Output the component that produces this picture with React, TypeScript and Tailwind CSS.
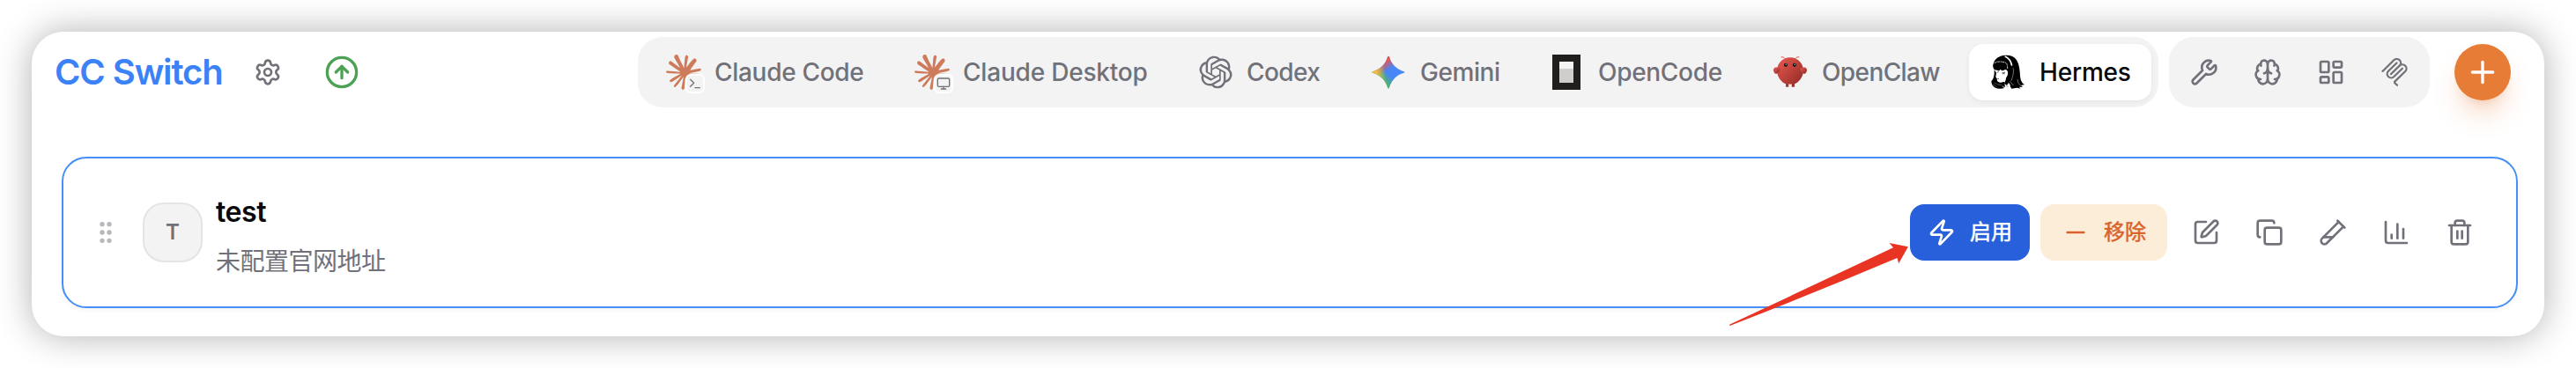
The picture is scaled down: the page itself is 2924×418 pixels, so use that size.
import type { ReactNode } from "react";
import {
  Brain,
  ChartColumn,
  CircleArrowUp,
  Copy,
  GripVertical,
  LayoutDashboard,
  Minus,
  Monitor,
  Plus,
  Settings,
  SquarePen,
  Terminal,
  TestTubeDiagonal,
  Trash2,
  Wrench,
  Zap,
} from "lucide-react";

function ClaudeIcon({ badge }: { badge: ReactNode }) {
  return (
    <span className="relative block size-10">
      <svg viewBox="0 0 24 24" className="size-10" fill="#ce7b5c">
        <path d="M4.709 15.955l4.72-2.647.08-.23-.08-.128H9.2l-.79-.048-2.698-.073-2.339-.097-2.266-.122-.571-.121L0 11.784l.055-.352.48-.321.686.06 1.52.103 2.278.158 1.652.097 2.449.255h.389l.055-.157-.134-.098-.103-.097-2.358-1.596-2.552-1.688-1.336-.972-.724-.491-.364-.462-.158-1.008.656-.722.881.06.225.061.893.686 1.908 1.476 2.491 1.833.365.304.145-.103.019-.073-.164-.274-1.355-2.446-1.446-2.49-.644-1.032-.17-.619a2.97 2.97 0 01-.104-.729L6.283.134 6.696 0l.996.134.42.364.62 1.414 1.002 2.229 1.555 3.03.456.898.243.832.091.255h.158V9.01l.128-1.706.237-2.095.23-2.695.08-.76.376-.91.747-.492.584.28.48.685-.067.444-.286 1.851-.559 2.903-.364 1.942h.212l.243-.242.985-1.306 1.652-2.064.73-.82.85-.904.547-.431h1.033l.76 1.129-.34 1.166-1.064 1.347-.881 1.142-1.264 1.7-.79 1.36.073.11.188-.02 2.856-.606 1.543-.28 1.841-.315.833.388.091.395-.328.807-1.969.486-2.309.462-3.439.813-.042.03.049.061 1.549.146.662.036h1.622l3.02.225.79.522.474.638-.079.485-1.215.62-1.64-.389-3.829-.91-1.312-.329h-.182v.11l1.093 1.068 2.006 1.81 2.509 2.33.127.578-.322.455-.34-.049-2.205-1.657-.851-.747-1.926-1.62h-.128v.17l.444.649 2.345 3.521.122 1.08-.17.353-.608.213-.668-.122-1.374-1.925-1.415-2.167-1.143-1.943-.14.08-.674 7.254-.316.37-.729.28-.607-.461-.322-.747.322-1.476.389-1.924.315-1.53.286-1.9.17-.632-.012-.042-.14.018-1.434 1.967-2.18 2.945-1.726 1.845-.414.164-.717-.37.067-.662.401-.589 2.388-3.036 1.44-1.882.93-1.086-.006-.158h-.055L4.132 18.56l-1.13.146-.487-.456.061-.746.231-.243 1.908-1.312-.006.006z" />
      </svg>
      <span className="absolute -right-1 -bottom-1 flex size-[22px] items-center justify-center rounded-[6px] border-2 border-white bg-[#f3f3f3]">
        {badge}
      </span>
    </span>
  );
}

function CodexIcon() {
  return (
    <svg viewBox="0 0 24 24" className="size-10" fill="currentColor" fillRule="evenodd">
      <path d="M21.55 10.004a5.416 5.416 0 00-.478-4.501c-1.217-2.09-3.662-3.166-6.05-2.66A5.59 5.59 0 0010.831 1C8.39.995 6.224 2.546 5.473 4.838A5.553 5.553 0 001.76 7.496a5.487 5.487 0 00.691 6.5 5.416 5.416 0 00.477 4.502c1.217 2.09 3.662 3.165 6.05 2.66A5.586 5.586 0 0013.168 23c2.443.006 4.61-1.546 5.361-3.84a5.553 5.553 0 003.715-2.66 5.488 5.488 0 00-.693-6.497v.001zm-8.381 11.558a4.199 4.199 0 01-2.675-.954c.034-.018.093-.05.132-.074l4.44-2.53a.71.71 0 00.364-.623v-6.176l1.877 1.069c.02.01.033.029.036.05v5.115c-.003 2.274-1.87 4.118-4.174 4.123zM4.192 17.78a4.059 4.059 0 01-.498-2.763c.032.02.09.055.131.078l4.44 2.53c.225.13.504.13.73 0l5.42-3.088v2.138a.068.068 0 01-.027.057L9.9 19.288c-1.999 1.136-4.552.46-5.707-1.51h-.001zM3.023 8.216A4.15 4.15 0 015.198 6.41l-.002.151v5.06a.711.711 0 00.364.624l5.42 3.087-1.876 1.07a.067.067 0 01-.063.005l-4.489-2.559c-1.995-1.14-2.679-3.658-1.53-5.63h.001zm15.417 3.54l-5.42-3.088L14.896 7.6a.067.067 0 01.063-.006l4.489 2.557c1.998 1.14 2.683 3.662 1.529 5.633a4.163 4.163 0 01-2.174 1.807V12.38a.71.71 0 00-.363-.623zm1.867-2.773a6.04 6.04 0 00-.132-.078l-4.44-2.53a.731.731 0 00-.729 0l-5.42 3.088V7.325a.068.068 0 01.027-.057L14.1 4.713c2-1.137 4.555-.46 5.707 1.513.487.833.664 1.809.499 2.757h.001zm-11.741 3.81l-1.877-1.068a.065.065 0 01-.036-.051V6.559c.001-2.277 1.873-4.122 4.181-4.12.976 0 1.92.338 2.671.954-.034.018-.092.05-.131.073l-4.44 2.53a.71.71 0 00-.365.623l-.003 6.173v.002zm1.02-2.168L12 9.25l2.414 1.375v2.75L12 14.75l-2.415-1.375v-2.75z" />
    </svg>
  );
}

const geminiPath =
  "M20.616 10.835a14.147 14.147 0 01-4.45-3.001 14.111 14.111 0 01-3.678-6.452.503.503 0 00-.975 0 14.134 14.134 0 01-3.679 6.452 14.155 14.155 0 01-4.45 3.001c-.65.28-1.318.505-2.002.678a.502.502 0 000 .975c.684.172 1.35.397 2.002.677a14.147 14.147 0 014.45 3.001 14.112 14.112 0 013.679 6.453.502.502 0 00.975 0c.172-.685.397-1.351.677-2.003a14.145 14.145 0 013.001-4.45 14.113 14.113 0 016.453-3.678.503.503 0 000-.975 13.245 13.245 0 01-2.003-.678z";

function GeminiIcon() {
  return (
    <svg viewBox="0 0 24 24" className="size-10">
      <defs>
        <linearGradient id="gem-green" gradientUnits="userSpaceOnUse" x1="7" y1="15.5" x2="11" y2="12">
          <stop stopColor="#4fb565" />
          <stop offset="1" stopColor="#4fb565" stopOpacity="0" />
        </linearGradient>
        <linearGradient id="gem-red" gradientUnits="userSpaceOnUse" x1="8" y1="5.5" x2="11.5" y2="11">
          <stop stopColor="#e9554b" />
          <stop offset="1" stopColor="#e9554b" stopOpacity="0" />
        </linearGradient>
        <linearGradient id="gem-yellow" gradientUnits="userSpaceOnUse" x1="3.5" y1="13.5" x2="17.5" y2="12">
          <stop stopColor="#f3c042" />
          <stop offset=".46" stopColor="#f3c042" stopOpacity="0" />
        </linearGradient>
      </defs>
      <path d={geminiPath} fill="#4686f7" />
      <path d={geminiPath} fill="url(#gem-green)" />
      <path d={geminiPath} fill="url(#gem-red)" />
      <path d={geminiPath} fill="url(#gem-yellow)" />
    </svg>
  );
}

function OpenCodeIcon() {
  return (
    <svg viewBox="0 0 40 40" className="size-10">
      <path d="M4 0h32v40H4z" fill="#211e1e" />
      <path d="M12 8h16v8H12z" fill="#f3f3f3" />
      <path d="M12 16h16v16H12z" fill="#cfcecd" />
    </svg>
  );
}

function OpenClawIcon() {
  return (
    <svg viewBox="0 0 120 120" className="size-10">
      <defs>
        <linearGradient id="claw" x1="0%" y1="0%" x2="100%" y2="100%">
          <stop offset="0%" stopColor="#eb5a52" />
          <stop offset="100%" stopColor="#8c2822" />
        </linearGradient>
      </defs>
      <path
        d="M60 10C30 10 15 35 15 55C15 75 30 95 45 100L45 110L55 110L55 100C55 100 60 102 65 100L65 110L75 110L75 100C90 95 105 75 105 55C105 35 90 10 60 10Z"
        fill="url(#claw)"
      />
      <path d="M20 45C5 40 0 50 5 60C10 70 20 65 25 55C28 48 25 45 20 45Z" fill="url(#claw)" />
      <path d="M100 45C115 40 120 50 115 60C110 70 100 65 95 55C92 48 95 45 100 45Z" fill="url(#claw)" />
      <path d="M45 15Q35 5 30 8M75 15Q85 5 90 8" fill="none" stroke="#eb5a52" strokeWidth="3" strokeLinecap="round" />
      <circle cx="45" cy="35" r="6" fill="#06080f" />
      <circle cx="75" cy="35" r="6" fill="#06080f" />
      <circle cx="46" cy="34" r="2.5" fill="#5de2cd" />
      <circle cx="76" cy="34" r="2.5" fill="#5de2cd" />
    </svg>
  );
}

function HermesIcon() {
  return (
    <svg viewBox="15 12 120 120" className="size-10">
      {/* hair */}
      <path d="M68 14C46 15 30 26 26 43C23 51 25 58 30 64L38 65L44 68L52 65L58 68L66 64C72 64 76 70 75 79C74 87 70 88 69 92C69 100 64 106 62 112L70 117L78 112L88 128L108 125L118 128L114 122L126 123L120 117L132 114C121 108 118 96 117 84C116 66 115 48 106 32C98 18 84 13 68 14Z" />
      {/* lower left locks */}
      <path d="M29 64L29 78C27 90 26 96 19 103C19 113 24 121 34 126C42 129 54 129 64 126L55 121L66 122L70 113L61 104C52 110 45 107 39 102L38 94L34 88L36 74Z" />
      {/* headband */}
      <path d="M65 18C77 23 86 34 89 50" fill="none" stroke="#fff" strokeWidth="5" />
      {/* fringe highlight and parted strands */}
      <path d="M29 41C42 33 56 36 69 40M70 41C74 46 74 52 74 60" fill="none" stroke="#fff" strokeWidth="2.4" strokeDasharray="7 2 4 1" />
      <path d="M93 58C97 74 91 88 87 101M108 96C109 107 113 114 121 119M82 103L94 117" fill="none" stroke="#fff" strokeWidth="1.3" />
      {/* face */}
      <path d="M37 65L45 68L50 62L55 68L61 65L69 64C76 68 76 79 71 84C69 91 67 98 61 104C53 107 46 104 42 101L40 94L35 89L38 84L36 76Z" fill="#fff" />
      <path d="M38 73L44 71M55 75L66 72M57 79C60 76 63 76 65 78M40 95L45 95" fill="none" stroke="#000" strokeWidth="2" />
      {/* collar */}
      <path d="M64 111L72 118L78 107L84 117L76 127L66 122Z" fill="#fff" />
      <path d="M68 114L78 124M76 112L70 124M24 113L38 122M28 108L48 117M44 112L60 119" stroke="#888" strokeWidth="1.6" />
    </svg>
  );
}

function McpIcon() {
  return (
    <svg viewBox="0 0 24 24" className="size-8" fill="currentColor" fillRule="evenodd">
      <path d="M15.688 2.343a2.588 2.588 0 00-3.61 0l-9.626 9.44a.863.863 0 01-1.203 0 .823.823 0 010-1.18l9.626-9.44a4.313 4.313 0 016.016 0 4.116 4.116 0 011.204 3.54 4.3 4.3 0 013.609 1.18l.05.05a4.115 4.115 0 010 5.9l-8.706 8.537a.274.274 0 000 .393l1.788 1.754a.823.823 0 010 1.18.863.863 0 01-1.203 0l-1.788-1.753a1.92 1.92 0 010-2.754l8.706-8.538a2.47 2.47 0 000-3.54l-.05-.049a2.588 2.588 0 00-3.607-.003l-7.172 7.034-.002.002-.098.097a.863.863 0 01-1.204 0 .823.823 0 010-1.18l7.273-7.133a2.47 2.47 0 00-.003-3.537z" />
      <path d="M14.485 4.703a.823.823 0 000-1.18.863.863 0 00-1.204 0l-7.119 6.982a4.115 4.115 0 000 5.9 4.314 4.314 0 006.016 0l7.12-6.982a.823.823 0 000-1.18.863.863 0 00-1.204 0l-7.119 6.982a2.588 2.588 0 01-3.61 0 2.47 2.47 0 010-3.54l7.12-6.982z" />
    </svg>
  );
}

const apps = [
  { label: "Claude Code", icon: <ClaudeIcon badge={<Terminal className="size-4" />} />, size: "w-[274px] gap-[15px]", tracking: "tracking-[-0.3px]" },
  { label: "Claude Desktop", icon: <ClaudeIcon badge={<Monitor className="size-4" />} />, size: "w-[314px] gap-[15px]", tracking: "tracking-[-0.2px]" },
  { label: "Codex", icon: <CodexIcon />, size: "w-[188px] gap-[15px]", tracking: "tracking-[-0.6px]" },
  { label: "Gemini", icon: <GeminiIcon />, size: "w-[194px] gap-4", tracking: "tracking-[-0.45px]" },
  { label: "OpenCode", icon: <OpenCodeIcon />, size: "w-[246px] gap-4", tracking: "tracking-[-0.3px]" },
  { label: "OpenClaw", icon: <OpenClawIcon />, size: "w-[239px] gap-4", tracking: "tracking-[-0.6px]" },
  { label: "Hermes", icon: <HermesIcon />, size: "w-[207px] gap-4", tracking: "tracking-[-0.2px]", active: true },
];

const tools = [
  { name: "skills", icon: <Wrench className="size-8" /> },
  { name: "memory", icon: <Brain className="size-8" /> },
  { name: "dashboard", icon: <LayoutDashboard className="size-8" /> },
  { name: "mcp", icon: <McpIcon /> },
];

const actions = [
  { name: "edit", icon: <SquarePen className="size-8" /> },
  { name: "copy", icon: <Copy className="size-8" /> },
  { name: "test", icon: <TestTubeDiagonal className="size-8" /> },
  { name: "usage", icon: <ChartColumn className="size-8" /> },
  { name: "delete", icon: <Trash2 className="size-8" /> },
];

function Header() {
  return (
    <header className="flex h-[92px] items-center pr-[38px] pl-[26px]">
      <h1 className="w-[226px] text-[40px] leading-none font-semibold tracking-[-1.1px] whitespace-nowrap text-[#3b82f6]">CC Switch</h1>
      <button className="text-[#71717a]">
        <Settings className="size-8" />
      </button>
      <button className="ml-12 text-[#4ca154]">
        <CircleArrowUp className="size-10" />
      </button>

      <nav className="ml-auto flex h-20 items-center gap-2 rounded-[28px] bg-[#f3f3f3] p-2">
        {apps.map((app) => (
          <button
            key={app.label}
            className={`flex h-16 items-center rounded-[16px] pl-6 text-[28px] font-medium whitespace-nowrap ${app.size} ${app.tracking} ${
              app.active ? "bg-white text-[#09090b] shadow-[0_2px_6px_rgba(0,0,0,0.06)]" : "text-[#71717a]"
            }`}
          >
            {app.icon}
            {app.label}
          </button>
        ))}
      </nav>

      <div className="ml-3 flex h-20 items-center gap-2 rounded-[28px] bg-[#f3f3f3] p-2 text-[#71717a]">
        {tools.map((tool) => (
          <button key={tool.name} className="flex size-16 items-center justify-center">
            {tool.icon}
          </button>
        ))}
      </div>

      <button className="ml-7 flex size-16 items-center justify-center rounded-full bg-[#e77c37] text-white shadow-[0_20px_30px_-6px_rgba(231,124,55,0.3),0_8px_12px_-8px_rgba(231,124,55,0.3)]">
        <Plus className="size-10" />
      </button>
    </header>
  );
}

function ProviderCard() {
  return (
    <section className="mt-[50px] mr-[30px] ml-[34px] flex h-[172px] items-center rounded-[28px] border-2 border-[#468ef8] bg-white px-8 shadow-[0_2px_6px_rgba(0,0,0,0.05)]">
      <GripVertical className="size-8 text-[#b8b8bc]" />
      <div className="ml-[26px] flex size-[68px] items-center justify-center rounded-[24px] border-2 border-[#e4e4e4] bg-[#f3f3f3] text-2xl font-semibold text-[#71717a]">
        T
      </div>
      <div className="ml-[15px] flex flex-col gap-4 pt-[10px]">
        <h3 className="text-[32px] leading-10 font-semibold tracking-[-0.4px] text-[#09090b]">test</h3>
        <p className="text-[28px] leading-10 tracking-[-0.5px] text-[#71717a]">未配置官网地址</p>
      </div>

      <div className="ml-auto flex items-center gap-3">
        <button className="flex h-16 items-center gap-4 rounded-[16px] bg-[#285fdb] px-5 text-2xl text-white [-webkit-text-stroke:0.5px]">
          <Zap className="size-8" />
          启用
        </button>
        <button className="flex h-16 items-center gap-4 rounded-[16px] bg-[#fcedd9] px-6 text-2xl text-[#d9622b] [-webkit-text-stroke:0.5px]">
          <Minus className="size-8" />
          移除
        </button>
        <div className="flex gap-2 text-[#71717a]">
          {actions.map((action) => (
            <button key={action.name} className="flex size-16 items-center justify-center">
              {action.icon}
            </button>
          ))}
        </div>
      </div>
    </section>
  );
}

export default function App() {
  return (
    <div className="relative h-[418px] w-[2924px] overflow-hidden bg-white p-9 font-[Inter,'Noto_Sans_CJK_SC',sans-serif]">
      <main className="h-[346px] rounded-[36px] bg-white shadow-[0_0_40px_rgba(0,0,0,0.31)]">
        <Header />
        <ProviderCard />
      </main>
      {/* pointer drawn over the card, aimed at the enable button */}
      <svg viewBox="0 0 208 96" className="absolute top-[275px] left-[1961px] h-24 w-[208px]" fill="#e93323">
        <path d="M204.9 5.3L183.6 1L188 6.3L2 93.8L2.6 95Q98 58 192.5 18L194.2 24.3Z" />
      </svg>
    </div>
  );
}
